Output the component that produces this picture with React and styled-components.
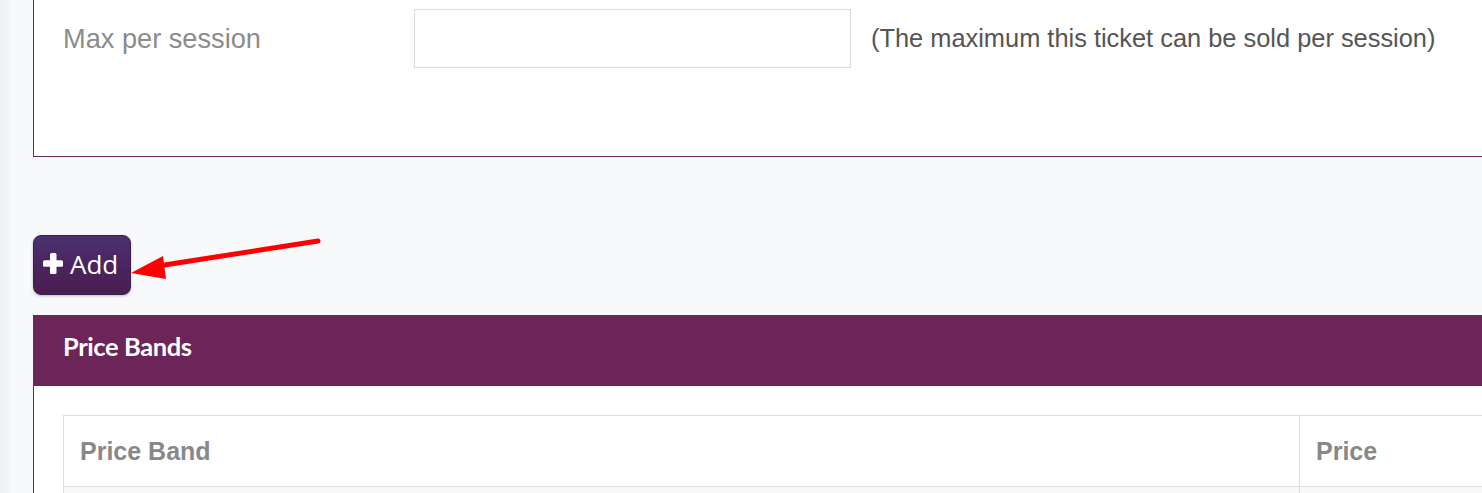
import React from "react";
import styled, { createGlobalStyle } from "styled-components";

const Global = createGlobalStyle`
  html, body { margin: 0; padding: 0; }
  body {
    background: linear-gradient(to right, #eef0f3 0px, #f3f4f7 8px, #f8f9fb 12px);
    font-family: "Liberation Sans", Arial, sans-serif;
    overflow: hidden;
  }
  #root { overflow: hidden; height: 493px; position: relative; }
`;

const PURPLE = "#6c2559";

const Page = styled.div`
  padding-left: 33px;
  width: 1600px;
  position: relative;
`;

const FormCard = styled.section`
  background: #fff;
  border-left: 1px solid ${PURPLE};
  border-bottom: 1px solid ${PURPLE};
  padding: 9px 0 88px 29px;
`;

const FieldRow = styled.div`
  display: flex;
  align-items: center;
`;

const Label = styled.label`
  width: 351px;
  font-size: 27.2px;
  color: #8c8c8c;
  padding-top: 1px;
`;

const TextInput = styled.input`
  width: 437px;
  height: 59px;
  box-sizing: border-box;
  border: 1px solid #dcdcdc;
  background: #fff;
  outline: none;
  margin: 0;
`;

const Help = styled.span`
  margin-left: 20px;
  font-size: 25.4px;
  color: #555;
  padding-bottom: 1px;
`;

const Toolbar = styled.div`
  padding: 78px 0 20px;
  display: flex;
`;

const AddButton = styled.button`
  width: 98px;
  height: 60px;
  box-sizing: border-box;
  border-radius: 8px;
  border: 1px solid #3d1f4d;
  background: linear-gradient(to bottom, #4b3170 0%, #4a2560 50%, #4a1d50 100%);
  box-shadow: 0 1px 3px rgba(0, 0, 0, 0.25);
  color: #fff;
  display: flex;
  align-items: center;
  justify-content: flex-start;
  gap: 7px;
  padding: 0 0 3px 9px;
  font-family: "Open Sans", sans-serif;
  font-size: 26px;
  cursor: pointer;
`;

const Panel = styled.section`
  background: #fff;
  border-left: 1px solid ${PURPLE};
`;

const PanelHeader = styled.header`
  height: 71px;
  background: ${PURPLE};
  margin-left: -1px;
  padding-left: 30px;
  display: flex;
  align-items: center;
`;

const PanelTitle = styled.h2`
  margin: 0;
  font-family: Lato, sans-serif;
  font-weight: 700;
  font-size: 25.5px;
  color: #fff;
  letter-spacing: -0.4px;
  padding-bottom: 10px;
`;

const PanelBody = styled.div`
  padding: 29px 0 0 29px;
`;

const Table = styled.table`
  border-collapse: collapse;
  width: 1500px;
  table-layout: fixed;
`;

const Th = styled.th`
  height: 71px;
  box-sizing: border-box;
  border: 1px solid #dddddd;
  text-align: left;
  padding: 0 0 0 16px;
  font-size: 25px;
  font-weight: 700;
  color: #888;
  width: ${(p) => p.$w || "auto"};
`;

const Td = styled.td`
  height: 40px;
  border: 1px solid #dddddd;
  background: #f9f9f9;
`;

const Arrow = styled.svg`
  position: absolute;
  left: 0;
  top: 0;
  pointer-events: none;
`;

function PlusIcon() {
  return (
    <svg width="20" height="21" viewBox="0 0 20 21" aria-hidden="true">
      <rect x="7" y="0" width="6.5" height="21" rx="1.5" fill="#fff" />
      <rect x="0" y="7.3" width="20" height="6.5" rx="1.5" fill="#fff" />
    </svg>
  );
}

export default function App() {
  return (
    <>
      <Global />
      <Page>
        <FormCard>
          <FieldRow>
            <Label>Max per session</Label>
            <TextInput type="text" />
            <Help>(The maximum this ticket can be sold per session)</Help>
          </FieldRow>
        </FormCard>
        <Toolbar>
          <AddButton>
            <PlusIcon />
            Add
          </AddButton>
        </Toolbar>
        <Panel>
          <PanelHeader>
            <PanelTitle>Price Bands</PanelTitle>
          </PanelHeader>
          <PanelBody>
            <Table>
              <thead>
                <tr>
                  <Th $w="1236px">Price Band</Th>
                  <Th>Price</Th>
                </tr>
              </thead>
              <tbody>
                <tr>
                  <Td />
                  <Td />
                </tr>
              </tbody>
            </Table>
          </PanelBody>
        </Panel>
      </Page>
      <Arrow width="1482" height="493">
        <line x1="318" y1="241" x2="158" y2="266" stroke="#ff0000" strokeWidth="5" strokeLinecap="round" />
        <polygon points="131,273 163,256 166,279" fill="#ff0000" />
      </Arrow>
    </>
  );
}
